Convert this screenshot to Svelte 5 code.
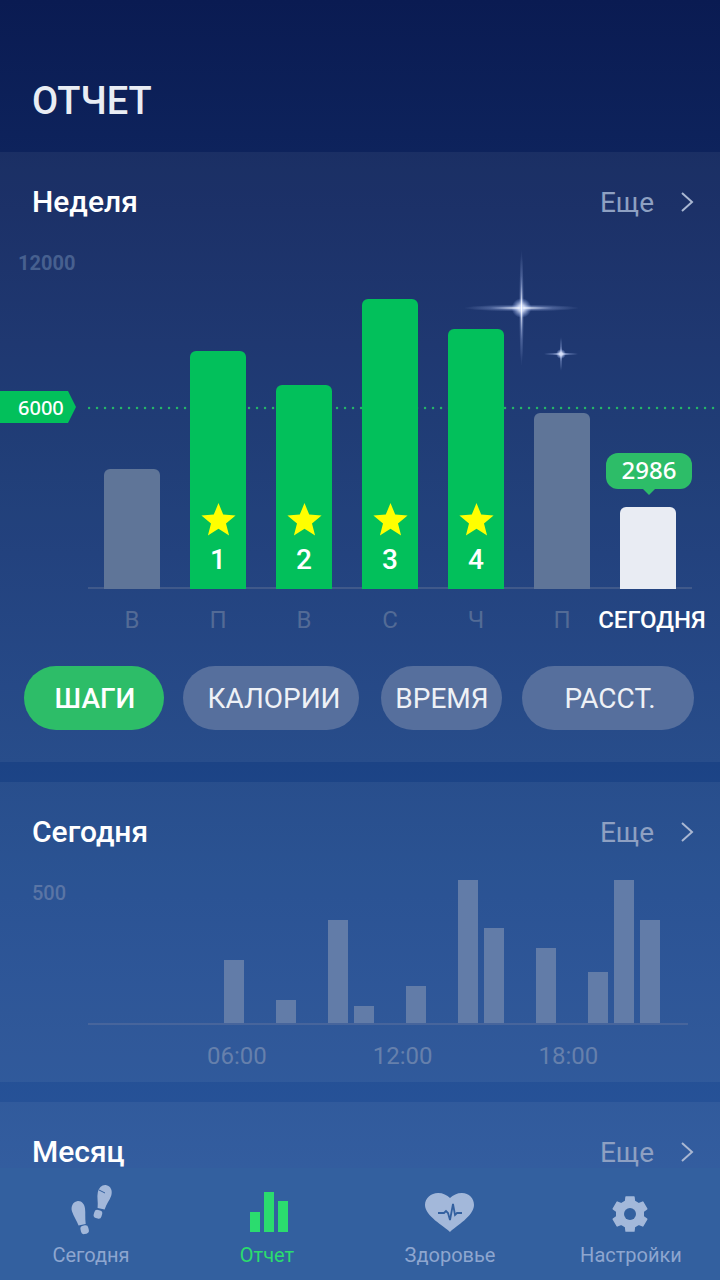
<script>
  const week = [
    { d: 'В', h: 120, kind: 'off' },
    { d: 'П', h: 238, kind: 'goal', n: 1 },
    { d: 'В', h: 204, kind: 'goal', n: 2 },
    { d: 'С', h: 290, kind: 'goal', n: 3 },
    { d: 'Ч', h: 260, kind: 'goal', n: 4 },
    { d: 'П', h: 176, kind: 'off' },
    { d: 'СЕГОДНЯ', h: 82, kind: 'today', bubble: '2986' }
  ];
  const pills = [
    { t: 'ШАГИ', cls: 'p1', on: true },
    { t: 'КАЛОРИИ', cls: 'p2' },
    { t: 'ВРЕМЯ', cls: 'p3' },
    { t: 'РАССТ.', cls: 'p4' }
  ];
  const hours = [0,0,0,0,0,63,0,23,0,103,17,0,37,0,143,95,0,75,0,51,143,103];
  const star = 'M17.5 0 L22.2 11.6 L34.6 12.5 L25 20.4 L28.1 32.5 L17.5 25.8 L6.9 32.5 L10 20.4 L0.4 12.5 L12.8 11.6 Z';

  function gearPath(cx, cy, ro, ri, ao, ai) {
    const pt = (r, deg) => {
      const a = (deg * Math.PI) / 180;
      return `${(cx + r * Math.cos(a)).toFixed(2)} ${(cy + r * Math.sin(a)).toFixed(2)}`;
    };
    let d = '';
    for (let k = 0; k < 6; k++) {
      const c = k * 60 - 90;
      d += `${k ? 'L' : 'M'}${pt(ri, c - ai)} L${pt(ro, c - ao)} L${pt(ro, c + ao)} L${pt(ri, c + ai)} `;
    }
    return d + 'Z';
  }
  const gear = gearPath(21, 30, 17.5, 13.5, 13, 19);
</script>

{#snippet more()}
  <div class="more">Еще
    <svg width="14" height="22" viewBox="0 0 14 22"><path d="M2 2 L12 11 L2 20" fill="none" stroke="currentColor" stroke-width="2"/></svg>
  </div>
{/snippet}

<div class="screen">
  <header class="top"><h1>ОТЧЕТ</h1></header>

  <section class="card week">
    <div class="head">
      <h2>Неделя</h2>
      {@render more()}
    </div>

    <div class="chart">
      <span class="y12">12000</span>
      <span class="tag">6000</span>
      <svg class="dots" width="632" height="4" viewBox="0 0 632 4">
        <line x1="1" y1="2" x2="632" y2="2" stroke="#25b569" stroke-width="2.400" stroke-linecap="round" stroke-dasharray="0.1 7.900"/>
      </svg>
      <svg class="spark" width="130" height="130" viewBox="0 0 130 130">
        <defs>
          <radialGradient id="g"><stop offset="0" stop-color="#fff"/><stop offset=".3" stop-color="#eaf0ff" stop-opacity=".85"/><stop offset="1" stop-color="#9db8ff" stop-opacity="0"/></radialGradient>
          <radialGradient id="r"><stop offset="0" stop-color="#fff"/><stop offset=".2" stop-color="#e4ecff" stop-opacity=".75"/><stop offset=".55" stop-color="#b9ccff" stop-opacity=".28"/><stop offset="1" stop-color="#b9ccff" stop-opacity="0"/></radialGradient>
        </defs>
        <circle cx="59.500" cy="58" r="10" fill="url(#g)"/>
        <ellipse cx="59.500" cy="58" rx="58" ry="3.500" fill="url(#r)"/>
        <ellipse cx="59.500" cy="58" rx="2.500" ry="58" fill="url(#r)"/>
        <circle cx="99" cy="104" r="5" fill="url(#g)"/>
        <ellipse cx="99" cy="104" rx="18" ry="1.600" fill="url(#r)"/>
        <ellipse cx="99" cy="104" rx="1.400" ry="18" fill="url(#r)"/>
      </svg>

      <div class="plot">
        {#each week as b}
          <div class="col">
            {#if b.bubble}<div class="bubble">{b.bubble}</div>{/if}
            <div class="bar {b.kind}" style="height:{b.h}px">
              {#if b.n}
                <svg width="35" height="33" viewBox="0 0 35 33"><path d={star} fill="#ffff00"/></svg>
                <b>{b.n}</b>
              {/if}
            </div>
          </div>
        {/each}
      </div>
      <div class="days">
        {#each week as b}
          <span class:today={b.kind === 'today'}>{b.d}</span>
        {/each}
      </div>
    </div>

    <div class="pills">
      {#each pills as p}
        <button class="{p.cls}" class:on={p.on}>{p.t}</button>
      {/each}
    </div>
  </section>

  <section class="card today-card">
    <div class="head">
      <h2>Сегодня</h2>
      {@render more()}
    </div>
    <div class="daychart">
      <span class="y500">500</span>
      <div class="hours">
        {#each hours as h}
          <div class="hour" style="height:{h}px"></div>
        {/each}
      </div>
      <div class="ticks"><span>06:00</span><span>12:00</span><span>18:00</span></div>
    </div>
  </section>

  <section class="card month">
    <div class="head">
      <h2>Месяц</h2>
      {@render more()}
    </div>
  </section>

  <nav class="tabs">
    <div class="tab">
      <svg width="44" height="58" viewBox="0 0 44 58" fill="#a3b8da">
        <g transform="rotate(-12 10.500 29)"><path d="M10.500 17c4.300 0 6.800 4 6.300 9-.3 4-2 9-2.500 15h-7.300c-.7-5-3-10-3.500-15-.4-5 2.700-9 7-9Z"/></g>
        <g transform="rotate(-12 15.500 45)"><rect x="11.500" y="41.500" width="8" height="8.500" rx="3"/></g>
        <g transform="rotate(12 35 13)"><path d="M35 1c4.300 0 7.300 4 6.800 9-.5 5-3 9-3.600 15h-7.200c-.5-6-3-10-3-15 0-5 2.700-9 7-9Z"/></g>
        <g transform="rotate(16 29 30)"><rect x="25" y="26" width="8" height="8.500" rx="3"/></g>
        <path d="M30 6l6 3" stroke="#33609f" stroke-width="1" fill="none"/>
      </svg>
      <span>Сегодня</span>
    </div>
    <div class="tab active">
      <svg width="44" height="58" viewBox="0 0 44 58" fill="#2bdc6e">
        <rect x="5" y="28" width="10" height="20"/><rect x="19" y="8" width="10" height="40"/><rect x="33" y="17" width="10" height="31"/>
      </svg>
      <span>Отчет</span>
    </div>
    <div class="tab">
      <svg width="52" height="58" viewBox="0 0 52 58">
        <path fill="#a3b8da" d="M26 48C20 42 1 32 1 21 1 14 7 9 14 9 19 9 23 11 26 14 29 11 33 9 38 9 45 9 50 14 50 21 50 32 32 42 26 48Z"/>
        <path fill="none" stroke="#33609f" stroke-width="1.800" d="M14 29h6l2-2 2 2 2 7 3-16 2 11 2-2h5"/>
      </svg>
      <span>Здоровье</span>
    </div>
    <div class="tab">
      <svg width="44" height="58" viewBox="0 0 44 58">
        <path fill="#a3b8da" stroke="#a3b8da" stroke-width="1.500" stroke-linejoin="round" d={gear}/>
        <circle cx="21" cy="30" r="6" fill="#33609f"/>
      </svg>
      <span>Настройки</span>
    </div>
  </nav>
</div>

<style>
  :global(body) { margin: 0; }
  .screen {
    position: relative;
    width: 720px;
    height: 1280px;
    overflow: hidden;
    background: linear-gradient(180deg, #0a1b52 0%, #1f4a8e 70%, #2c589f 100%);
    font-family: Roboto, "Noto Sans", sans-serif;
    color: #fff;
  }
  .top { height: 152px; box-sizing: border-box; padding: 78px 0 0 32px; }
  h1 { margin: 0; font-size: 38px; line-height: 46px; font-weight: 500; color: #e9edf4; }
  .card { background: rgba(255, 255, 255, 0.055); margin-bottom: 20px; }
  .week { height: 610px; }
  .today-card { height: 300px; }
  .month { height: 178px; }
  .head { display: flex; justify-content: space-between; align-items: center; padding: 32px 26px 0 32px; height: 36px; }
  h2 { margin: 0; font-size: 30px; line-height: 36px; font-weight: 500; }
  .more { display: flex; align-items: center; gap: 26px; font-size: 28px; color: #8ea0c2; }
  .more svg { color: #a9b7d2; }

  .chart { position: relative; margin-top: 32px; height: 414px; }
  .y12 { position: absolute; left: 18px; top: -1px; font-size: 20px; line-height: 24px; font-weight: 700; color: #47608f; }
  .tag {
    position: absolute; left: 0; top: 139px; width: 76px; height: 32px; box-sizing: border-box;
    padding-left: 18px; background: #02c05b; font-family: "Noto Sans", sans-serif; font-size: 20px; line-height: 33px; font-weight: 500;
    clip-path: polygon(0 0, 68px 0, 76px 16px, 68px 100%, 0 100%);
  }
  .dots { position: absolute; left: 88px; top: 154px; }
  .spark { position: absolute; left: 462px; top: -2px; z-index: 2; pointer-events: none; }
  .plot {
    position: absolute; left: 88px; width: 604px; top: 0; height: 337px; box-sizing: border-box;
    padding-left: 16px; display: flex; gap: 30px; align-items: flex-end; border-bottom: 2px solid #40598a;
  }
  .col { width: 56px; position: relative; margin-bottom: -2px; }
  .bar { border-radius: 6px 6px 0 0; display: flex; flex-direction: column; justify-content: flex-end; align-items: center; position: relative; }
  .bar.off { background: #5f7598; }
  .bar.goal { background: #02c05b; }
  .bar.today { background: #e9ecf3; }
  .bar svg { margin-bottom: 9px; }
  .bar b { font-size: 28px; line-height: 30px; font-weight: 500; margin-bottom: 14px; }
  .bubble {
    position: absolute; left: -14px; bottom: 100%; margin-bottom: 18px; width: 86px; height: 36px;
    background: #2dbd68; border-radius: 12px; text-align: center; font-family: "Noto Sans", sans-serif; font-size: 24px; line-height: 34px; font-weight: 500;
  }
  .bubble::after {
    content: ''; position: absolute; left: 37px; top: 36px; border: 6px solid transparent; border-top-color: #2dbd68; border-bottom: 0;
  }
  .days { position: absolute; left: 88px; top: 352px; display: flex; gap: 30px; padding-left: 16px; }
  .days span { width: 56px; box-sizing: border-box; display: flex; justify-content: center; white-space: nowrap; font-size: 24px; line-height: 32px; color: #536b96; }
  .days span.today { color: #fff; font-weight: 500; padding-left: 8px; }

  .pills { padding-left: 24px; display: flex; position: relative; }
  .pills button {
    height: 64px; border: 0; border-radius: 32px; padding: 0; background: #566f9d; color: #eef1f6;
    font-family: inherit; font-size: 28px; font-weight: 400;
  }
  .pills button.on { background: #2dbd68; color: #fff; font-weight: 500; }
  .p1 { width: 140px; }
  .pills .p1 { padding-left: 2px; }
  .p2 { width: 176px; margin-left: 19px; }
  .pills .p2 { padding-left: 6px; }
  .p3 { width: 121px; margin-left: 22px; }
  .pills .p3 { padding-left: 1px; }
  .p4 { width: 172px; margin-left: 20px; }
  .pills .p4 { padding-left: 4px; }

  .daychart { position: relative; margin-top: 32px; height: 200px; }
  .y500 { position: absolute; left: 32px; top: -1px; font-size: 20px; line-height: 24px; font-weight: 500; color: #5a75a5; }
  .hours {
    position: absolute; left: 88px; width: 600px; top: 0; height: 143px; box-sizing: border-box; padding-left: 6px;
    display: flex; gap: 6px; align-items: flex-end; border-bottom: 2px solid #47659c;
  }
  .hour { width: 20px; background: #627ca8; }
  .ticks { position: absolute; top: 158px; left: 207px; display: flex; gap: 106px; font-size: 24px; line-height: 32px; color: #6680ac; }

  .tabs {
    position: absolute; left: 0; right: 0; bottom: 0; height: 112px; background: #33609f;
    display: grid; grid-template-columns: 182px 170px 196px 166px;
  }
  .tab { display: flex; flex-direction: column; align-items: center; padding-top: 16px; }
  .tab span { font-size: 20px; line-height: 26px; color: #8ea6cf; }
  .tab.active span { color: #2bdc6e; }
</style>
